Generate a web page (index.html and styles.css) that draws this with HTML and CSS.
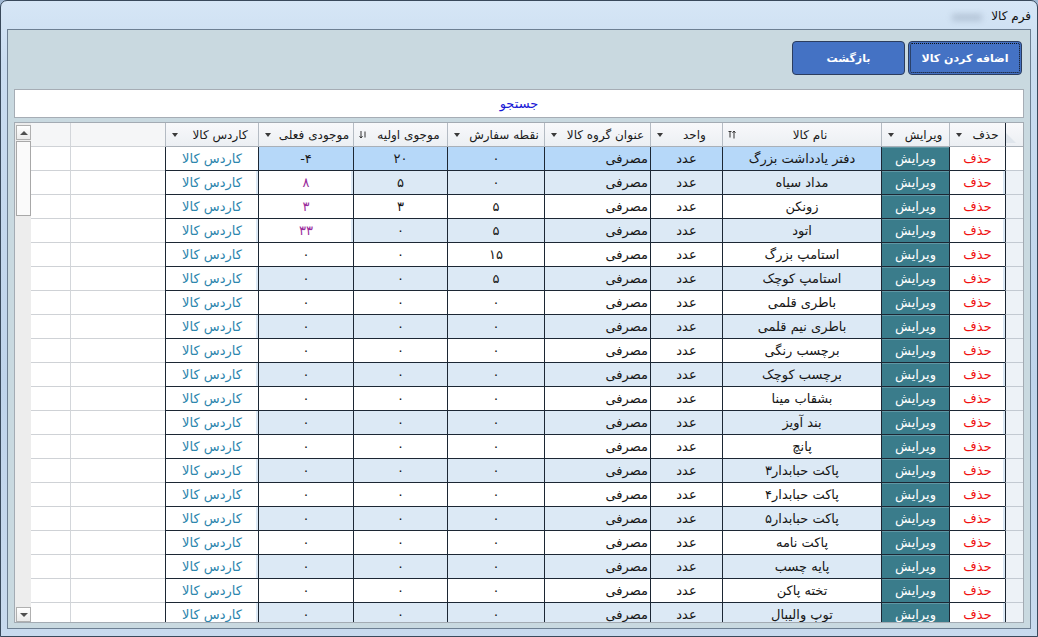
FILE: index.html
```html
<!DOCTYPE html>
<html lang="fa" dir="rtl">
<head>
    <meta charset="UTF-8">
    <title>فرم کالا</title>
    <link rel="stylesheet" href="styles.css">
</head>
<body>
<div class="window">
    <div class="title-bar">
        <span class="title">فرم کالا</span>
        <span class="title-blur"></span>
    </div>

    <div class="client">
        <div class="toolbar">
            <button class="btn btn-add">اضافه کردن کالا</button>
            <button class="btn btn-back">بازگشت</button>
        </div>

        <div class="search">جستجو</div>

        <div class="grid">
            <div id="grid-body" class="grid-body">
                <div class="row head">
                    <div class="cell corner">
                        <svg width="10" height="10" viewBox="0 0 10 10"><polygon points="0,0 10,10 0,10" fill="#dfe5ec"/></svg>
                    </div>
                    <div class="cell"><span class="label">حذف</span><i class="drop"></i></div>
                    <div class="cell"><span class="label">ویرایش</span><i class="drop"></i></div>
                    <div class="cell">
                        <span class="label">نام کالا</span>
                        <svg class="sort" width="8" height="9" viewBox="0 0 8 9"><path d="M0.5 1.5h3M2 1.5v6M6 1v7.5M4.5 2.8L6 1l1.5 1.8" stroke="#333" fill="none"/></svg>
                    </div>
                    <div class="cell"><span class="label">واحد</span><i class="drop"></i></div>
                    <div class="cell"><span class="label">عنوان گروه کالا</span><i class="drop"></i></div>
                    <div class="cell"><span class="label">نقطه سفارش</span><i class="drop"></i></div>
                    <div class="cell">
                        <span class="label">موجوی اولیه</span>
                        <svg class="sort" width="8" height="9" viewBox="0 0 8 9"><path d="M2 1v7M0.5 6.2L2 8l1.5-1.8M6 1.5v6" stroke="#333" fill="none"/></svg>
                    </div>
                    <div class="cell"><span class="label">موجودی فعلی</span><i class="drop"></i></div>
                    <div class="cell"><span class="label">کاردس کالا</span><i class="drop"></i></div>
                    <div class="cell blank"></div>
                    <div class="cell filler"></div>
                </div>
            </div>

            <div class="scrollbar">
                <div class="sb-btn"><i class="sb-up"></i></div>
                <div class="sb-thumb"></div>
                <div class="sb-track"></div>
                <div class="sb-btn"><i class="sb-down"></i></div>
            </div>
        </div>
    </div>
</div>

<script>
    // name, order point, initial stock, current stock
    const items = [
        ['دفتر یادداشت بزرگ', '۰', '۲۰', '-۴'],
        ['مداد سیاه', '۰', '۵', '۸'],
        ['زونکن', '۵', '۳', '۳'],
        ['اتود', '۵', '۰', '۳۳'],
        ['استامپ بزرگ', '۱۵', '۰', '۰'],
        ['استامپ کوچک', '۵', '۰', '۰'],
        ['باطری قلمی', '۰', '۰', '۰'],
        ['باطری نیم قلمی', '۰', '۰', '۰'],
        ['برچسب رنگی', '۰', '۰', '۰'],
        ['برچسب کوچک', '۰', '۰', '۰'],
        ['بشقاب مینا', '۰', '۰', '۰'],
        ['بند آویز', '۰', '۰', '۰'],
        ['پانچ', '۰', '۰', '۰'],
        ['پاکت حبابدار۳', '۰', '۰', '۰'],
        ['پاکت حبابدار۴', '۰', '۰', '۰'],
        ['پاکت حبابدار۵', '۰', '۰', '۰'],
        ['پاکت نامه', '۰', '۰', '۰'],
        ['پایه چسب', '۰', '۰', '۰'],
        ['تخته پاکن', '۰', '۰', '۰'],
        ['توپ والیبال', '۰', '۰', '۰']
    ];
    const lowStock = ['۸', '۳', '۳۳'];
    const body = document.getElementById('grid-body');

    const addCell = (row, cls, text) => {
        const cell = document.createElement('div');
        cell.className = 'cell ' + cls;
        if (text !== undefined) {
            const span = document.createElement('bdi');
            span.textContent = text;
            cell.appendChild(span);
        }
        row.appendChild(cell);
    };

    items.forEach((item, i) => {
        const row = document.createElement('div');
        row.className = 'row';
        if (i === 0) row.classList.add('selected');
        else if (i % 2 === 1) row.classList.add('alt');

        addCell(row, 'rowhead');
        addCell(row, 'delete', 'حذف');
        addCell(row, 'edit', 'ویرایش');
        addCell(row, 'data', item[0]);
        addCell(row, 'data', 'عدد');
        addCell(row, 'data start', 'مصرفی');
        addCell(row, 'data', item[1]);
        addCell(row, 'data', item[2]);
        addCell(row, lowStock.includes(item[3]) ? 'low' : 'data', item[3]);
        addCell(row, 'cardex', 'کاردس کالا');
        addCell(row, 'blank');
        addCell(row, 'filler');
        body.appendChild(row);
    });
</script>
</body>
</html>
```

FILE: styles.css
```css
* {
    box-sizing: border-box;
}
html, body {
    margin: 0;
}
body {
    width: 1038px;
    height: 637px;
    overflow: hidden;
    font-family: "DejaVu Sans", "Noto Sans", sans-serif;
    font-size: 12px;
    color: #161616;
    background: #9fb7d2;
}
.window {
    width: 1038px;
    height: 637px;
    border: 1px solid #39495b;
    border-radius: 7px 7px 0 0;
    background: linear-gradient(180deg, #d6e6f6 0%, #c9dcf0 10%, #bfd4eb 60%, #c8daee 100%);
    padding: 0 6px 7px 6px;
    display: flex;
    flex-direction: column;
}
.title-bar {
    height: 28px;
    display: flex;
    align-items: center;
}
.title {
    color: #111;
    font-size: 12px;
    margin-top: 2px;
}
.title-blur {
    width: 30px;
    height: 7px;
    margin-right: 9px;
    margin-top: 4px;
    background: #8c9cb0;
    opacity: 0.45;
    filter: blur(3px);
}
.client {
    flex: 1;
    border: 1px solid #6d7f92;
    background: #c9d9e0;
    padding: 11px 6px 5px 6px;
    display: flex;
    flex-direction: column;
}
.toolbar {
    display: flex;
    gap: 3px;
    margin-right: 2px;
}
.btn {
    height: 34px;
    border: 1px solid #2c3d5e;
    border-radius: 4px;
    background: #4472c4;
    color: #fff;
    font-family: "DejaVu Sans", sans-serif;
    font-size: 11px;
    font-weight: bold;
    padding: 0;
}
.btn-add {
    width: 114px;
    outline: 1px dotted #111;
    outline-offset: -3px;
}
.btn-back {
    width: 113px;
}
.search {
    margin-top: 14px;
    height: 29px;
    border: 1px solid #a6adb5;
    background: #fff;
    color: #1818d6;
    font-size: 13px;
    line-height: 27px;
    text-align: center;
}
.grid {
    margin-top: 4px;
    height: 501px;
    border: 1px solid #a3abb3;
    background: #fff;
    display: flex;
    overflow: hidden;
}
.grid-body {
    width: 992px;
    overflow: hidden;
}
.row {
    display: grid;
    grid-template-columns: 18px 56px 68px 159px 72px 106px 97px 94px 95px 93px 95px 39px;
    height: 24px;
    font-size: 13px;
}
.row.head {
    font-size: 12px;
}
.cell {
    border-left: 1px solid #1c2734;
    border-bottom: 1px solid #1c2734;
    display: flex;
    align-items: center;
    justify-content: center;
    white-space: nowrap;
    overflow: hidden;
    background: #fff;
}
.head .cell {
    background: linear-gradient(180deg, #f8f9fb, #eceff3);
    border-left-color: #b4bbc3;
    border-bottom-color: #a9b0b8;
    color: #1a1a1a;
}
.head .label {
    flex: 1;
    text-align: center;
}
.drop {
    width: 0;
    height: 0;
    border-left: 3px solid transparent;
    border-right: 3px solid transparent;
    border-top: 4px solid #3a3a3a;
    margin: 0 4px 0 6px;
}
.sort {
    margin: 0 3px 0 5px;
}
.head .corner {
    align-items: flex-end;
    justify-content: flex-end;
    padding: 0 3px 3px 0;
    border-left-color: #1c2734;
}
.head .blank,
.head .filler {
    background: #f5f6f7;
}
.cell.blank {
    border-left-color: #d3d6da;
    border-bottom-color: #cfd2d6;
}
.cell.filler {
    border-left: none;
    border-bottom-color: #cfd2d6;
}
.cell.rowhead {
    background: #edf2f7;
    border-bottom-color: #c3cad2;
}
.row.selected .rowhead {
    background: #fff;
}
.cell.delete {
    color: #f01010;
}
.cell.edit {
    background: #3a7c8b;
    color: #fff;
    box-shadow: inset 0 1px 0 #5f97a4;
}
.cell.start {
    justify-content: flex-start;
    padding-right: 2px;
}
.cell.low {
    color: #9a2e9c;
}
.cell.cardex {
    color: #2c85ad;
}
.row.alt .data {
    background: #dce9f5;
}
.row.alt .delete,
.row.alt .cardex,
.row.alt .low {
    box-shadow: inset -2px 0 0 #dce9f5;
}
.row.selected .data {
    background: #b6d8f9;
}
.scrollbar {
    width: 16px;
    background: #ededed;
    padding: 2px 0 0 1px;
    display: flex;
    flex-direction: column;
}
.sb-btn {
    height: 15px;
    border: 1px solid #b0b0b0;
    background: linear-gradient(180deg, #ffffff, #ebebeb);
    display: flex;
    align-items: center;
    justify-content: center;
}
.sb-up {
    border-left: 4px solid transparent;
    border-right: 4px solid transparent;
    border-bottom: 4px solid #505050;
}
.sb-down {
    border-left: 4px solid transparent;
    border-right: 4px solid transparent;
    border-top: 4px solid #505050;
}
.sb-thumb {
    height: 75px;
    margin-top: 1px;
    border: 1px solid #a8a8a8;
    background: #fafafa;
}
.sb-track {
    flex: 1;
}
```
